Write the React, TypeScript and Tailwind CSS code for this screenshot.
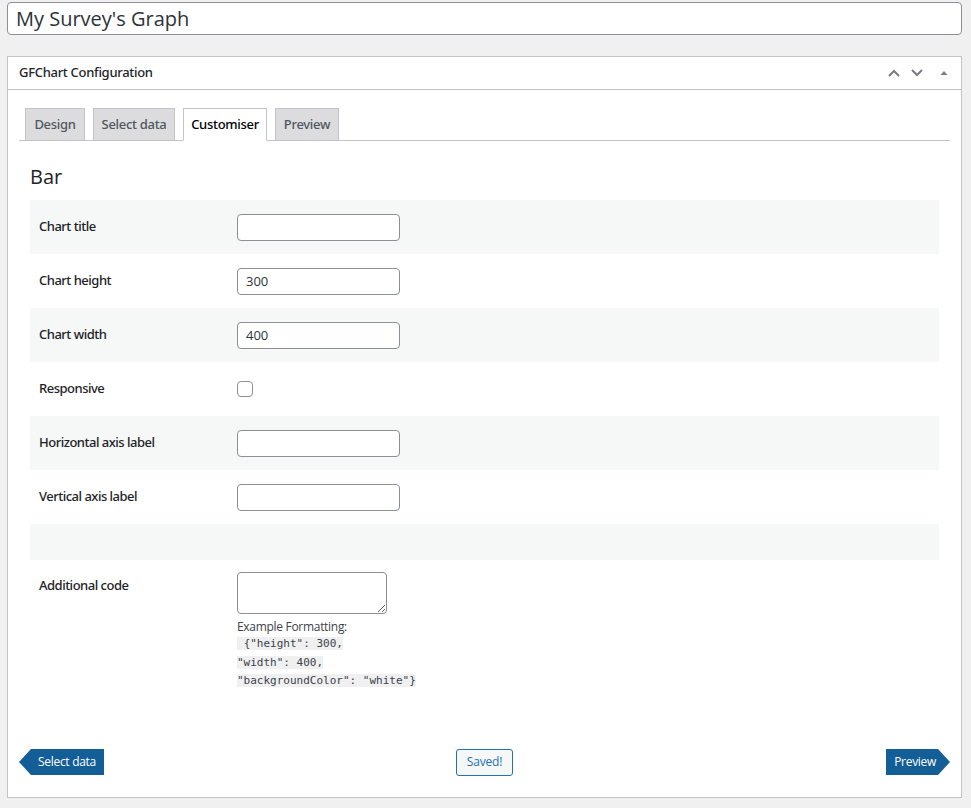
import { useState } from "react";

const rows = [
  { label: "Chart title", value: "", kind: "text", shade: true },
  { label: "Chart height", value: "300", kind: "text", shade: false },
  { label: "Chart width", value: "400", kind: "text", shade: true },
  { label: "Responsive", value: "", kind: "check", shade: false },
  { label: "Horizontal axis label", value: "", kind: "text", shade: true },
  { label: "Vertical axis label", value: "", kind: "text", shade: false },
];

const tabs = [
  { name: "Design", w: "w-[60px]" },
  { name: "Select data", w: "w-[82px]" },
  { name: "Customiser", w: "w-[84px]" },
  { name: "Preview", w: "w-[64px]" },
];

const App = () => {
  const [active] = useState("Customiser");
  return (
    <div className="min-h-[808px] bg-[#f0f0f1] px-[7px] pt-[2px] pb-[10px] font-['Open_Sans','Noto_Sans',sans-serif] text-[#1d2327]">
      <input
        defaultValue="My Survey's Graph"
        className="w-[955px] h-[33px] px-[8px] text-[20px] leading-[33px] bg-white border border-[#8c8f94] rounded-[4px] outline-none text-[#2c3338]"
      />

      <div className="mt-[21px] w-[955px] bg-white border border-[#c3c4c7]">
        <div className="h-[33px] flex items-center justify-between border-b border-[#c3c4c7] pl-[11px] pr-[12px]">
          <h2 className="font-['Noto_Sans',sans-serif] text-[13px] font-medium tracking-[-0.3px]">GFChart Configuration</h2>
          <div className="flex items-center text-[#787c82]">
            <svg width="14" height="14" viewBox="0 0 14 14" className="mr-[9px]">
              <path d="M2 10 L7 5 L12 10" fill="none" stroke="currentColor" strokeWidth="2" />
            </svg>
            <svg width="14" height="14" viewBox="0 0 14 14" className="mr-[15px]">
              <path d="M2 4 L7 9 L12 4" fill="none" stroke="currentColor" strokeWidth="2" />
            </svg>
            <svg width="10" height="10" viewBox="0 0 10 10">
              <path d="M1.5 7 L5 3 L8.5 7 Z" fill="currentColor" />
            </svg>
          </div>
        </div>

        <div className="px-[11px] pt-[18px]">
          <div className="flex items-end gap-[8px] border-b border-[#c3c4c7] pl-[6px]">
            {tabs.map((t) => (
              <div
                key={t.name}
                className={
                  t.name === active
                    ? `${t.w} h-[33px] -mb-px flex items-center justify-center font-['Noto_Sans',sans-serif] text-[13px] font-medium tracking-[-0.3px] border border-[#c3c4c7] border-b-white bg-white text-black`
                    : `${t.w} h-[32px] flex items-center justify-center font-['Noto_Sans',sans-serif] text-[13px] font-medium tracking-[-0.3px] border border-[#c3c4c7] border-b-0 bg-[#dcdcde] text-[#50575e]`
                }
              >
                {t.name}
              </div>
            ))}
          </div>

          <div className="px-[11px]">
            <h3 className="mt-[22px] mb-[9px] text-[20px] leading-[28px] font-normal text-[#1d2327]">Bar</h3>

            <div className="w-[909px]">
              {rows.map((r) => (
                <div
                  key={r.label}
                  className={`flex items-center h-[54px] ${r.shade ? "bg-[#f6f7f7]" : "bg-white"}`}
                >
                  <div className="w-[207px] pl-[9px] font-['Noto_Sans',sans-serif] text-[13px] font-medium tracking-[-0.5px] text-[#1d2327]">{r.label}</div>
                  {r.kind === "text" ? (
                    <input
                      defaultValue={r.value}
                      className="w-[163px] h-[27px] px-[8px] text-[13px] border border-[#8c8f94] rounded-[4px] bg-white outline-none text-[#2c3338]"
                    />
                  ) : (
                    <span className="block w-[16px] h-[16px] border border-[#8c8f94] rounded-[4px] bg-white" />
                  )}
                </div>
              ))}
              <div className="h-[36px] bg-[#f6f7f7]" />
              <div className="flex pt-[12px] pb-[20px]">
                <div className="w-[207px] pl-[9px] font-['Noto_Sans',sans-serif] text-[13px] font-medium tracking-[-0.5px] pt-[4px]">Additional code</div>
                <div>
                  <textarea className="block w-[150px] h-[42px] border border-[#8c8f94] rounded-[4px] bg-white resize" />
                  <p className="mt-[5px] text-[12px] leading-[16px] tracking-[-0.3px] text-[#3c434a]">Example Formatting:</p>
                  <div className="font-['DejaVu_Sans_Mono','Liberation_Mono',monospace] text-[11px] leading-[18.5px] text-[#3c434a]">
                    <span className="bg-[#f0f0f1]">&nbsp;{'{"height": 300,'}</span>
                    <br />
                    <span className="bg-[#f0f0f1]">{'"width": 400,'}</span>
                    <br />
                    <span className="bg-[#f0f0f1]">{'"backgroundColor": "white"}'}</span>
                  </div>
                </div>
              </div>
            </div>
          </div>

          <div className="grid grid-cols-[1fr_auto_1fr] items-center pt-[38px] pb-[21px]">
            <div className="flex items-center">
              <span className="w-0 h-0 border-y-[13px] border-y-transparent border-r-[12px] border-r-[#135e96]" />
              <span className="h-[26px] pl-[7px] pr-[8px] flex items-center bg-[#135e96] text-white text-[12px] tracking-[-0.3px]">Select data</span>
            </div>
            <button className="h-[27px] px-[10px] text-[12px] tracking-[-0.2px] text-[#2271b1] border border-[#2271b1] rounded-[3px] bg-[#f6f7f7]">
              Saved!
            </button>
            <div className="flex items-center justify-end">
              <span className="h-[26px] pl-[8px] pr-[2px] flex items-center bg-[#135e96] text-white text-[12px] tracking-[-0.3px]">Preview</span>
              <span className="w-0 h-0 border-y-[13px] border-y-transparent border-l-[12px] border-l-[#135e96]" />
            </div>
          </div>
        </div>
      </div>
    </div>
  );
};

export default App;
